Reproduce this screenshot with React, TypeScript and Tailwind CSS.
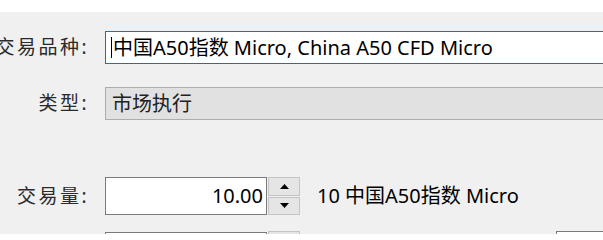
import React from "react";

const font = { fontFamily: '"Noto Sans", "Noto Sans CJK SC", sans-serif' };

function Label({ children }: { children: React.ReactNode }) {
  return (
    <div className="w-[91px] shrink-0 flex justify-end pr-[2px] text-[19px] tracking-[2.5px] text-[#2a2a2a] whitespace-nowrap leading-none">
      {children}
    </div>
  );
}

function Spinner() {
  return (
    <div className="flex flex-col w-[32px] h-[38px] ml-px gap-px">
      <div className="flex-1 flex items-center justify-center bg-[#e5e5e5] border border-[#c4c4c4]">
        <svg width="9" height="5" viewBox="0 0 9 5"><path d="M0 5 L4.5 0 L9 5 Z" fill="#000" /></svg>
      </div>
      <div className="flex-1 flex items-center justify-center bg-[#e5e5e5] border border-[#c4c4c4]">
        <svg width="9" height="5" viewBox="0 0 9 5"><path d="M0 0 L4.5 5 L9 0 Z" fill="#000" /></svg>
      </div>
    </div>
  );
}

export default function App() {
  return (
    <div className="w-[603px] h-[234px] overflow-hidden bg-[#f0f0f0] flex flex-col" style={font}>
      <div className="h-[12px] bg-white shrink-0" />
      <div className="flex items-center mt-[19px] shrink-0">
        <Label>交易品种:</Label>
        <div className="ml-[14px] w-[520px] h-[33px] shrink-0 bg-white border border-[#0078d7] flex items-center pl-[5px] text-[20px] text-black whitespace-nowrap leading-none">
          <span className="inline-block w-px h-[21px] bg-black mr-px" />
          中国A50指数 Micro, China A50 CFD Micro
        </div>
      </div>
      <div className="flex items-center mt-[23px] shrink-0">
        <Label>类型:</Label>
        <div className="ml-[14px] w-[520px] h-[33px] shrink-0 bg-[#e1e1e1] border border-[#adadad] flex items-center pl-[6px] text-[20px] text-[#222] whitespace-nowrap leading-none">
          市场执行
        </div>
      </div>
      <div className="flex items-center mt-[57px] shrink-0">
        <Label>交易量:</Label>
        <div className="ml-[14px] w-[162px] h-[38px] shrink-0 bg-white border border-[#7a7a7a] flex items-center justify-end pr-[3px] text-[20px] text-black leading-none">
          10.00
        </div>
        <Spinner />
        <div className="ml-[17px] text-[20px] text-black whitespace-nowrap leading-none">10 中国A50指数 Micro</div>
      </div>
      <div className="flex items-start mt-[16px] shrink-0">
        <div className="w-[105px] shrink-0" />
        <div className="w-[162px] h-[38px] mt-px shrink-0 bg-white border border-[#7a7a7a]" />
        <div className="w-[32px] h-[38px] ml-px shrink-0 bg-[#e5e5e5] border border-[#c4c4c4]" />
        <div className="ml-[256px] w-[100px] h-[38px] shrink-0 bg-white border border-[#7a7a7a]" />
      </div>
    </div>
  );
}
